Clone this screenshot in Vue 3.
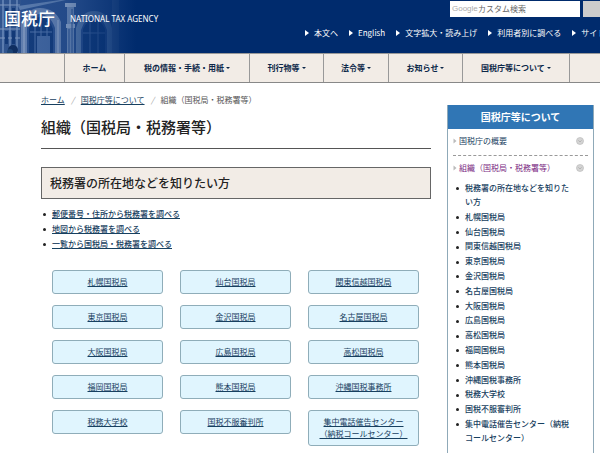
<script setup>
const headerLinks = ['本文へ', 'English', '文字拡大・読み上げ', '利用者別に調べる', 'サイト']

const navItems = [
  { label: 'ホーム', menu: false },
  { label: '税の情報・手続・用紙', menu: true },
  { label: '刊行物等', menu: true },
  { label: '法令等', menu: true },
  { label: 'お知らせ', menu: true },
  { label: '国税庁等について', menu: true },
]

const searches = [
  '郵便番号・住所から税務署を調べる',
  '地図から税務署を調べる',
  '一覧から国税局・税務署を調べる',
]

const offices = [
  ['札幌国税局'], ['仙台国税局'], ['関東信越国税局'],
  ['東京国税局'], ['金沢国税局'], ['名古屋国税局'],
  ['大阪国税局'], ['広島国税局'], ['高松国税局'],
  ['福岡国税局'], ['熊本国税局'], ['沖縄国税事務所'],
  ['税務大学校'], ['国税不服審判所'], ['集中電話催告センター', '（納税コールセンター）'],
]

const sideItems = [
  '税務署の所在地などを知りたい方',
  '札幌国税局', '仙台国税局', '関東信越国税局', '東京国税局', '金沢国税局',
  '名古屋国税局', '大阪国税局', '広島国税局', '高松国税局', '福岡国税局',
  '熊本国税局', '沖縄国税事務所', '税務大学校', '国税不服審判所',
  '集中電話催告センター（納税コールセンター）',
]
</script>

<template>
  <div class="page">
    <header class="header">
      <svg class="building" viewBox="0 0 136 53" aria-hidden="true">
        <defs>
          <linearGradient id="fade" x1="0" x2="1" y1="0" y2="0">
            <stop offset="0" stop-color="#002b6d" stop-opacity="0" />
            <stop offset="0.5" stop-color="#002b6d" stop-opacity="0.2" />
            <stop offset="0.8" stop-color="#002b6d" stop-opacity="0.65" />
            <stop offset="1" stop-color="#002b6d" />
          </linearGradient>
        </defs>
        <rect width="136" height="53" fill="#2c5290" />
        <path d="M0 0H21V53H0Z" fill="#31558f" />
        <path d="M3 0V53M10 0V53M17 0V53" stroke="#5c7daf" stroke-width="2" />
        <path d="M0 5H20M0 29H20M0 38H20" stroke="#8099bf" stroke-width="1" />
        <path d="M5 8H8V26H5ZM12 8H15V26H12ZM5 31H8V44H5ZM12 31H15V44H12Z" fill="#133a78" />
        <path d="M18 6L60 0H66L20 10Z" fill="#5f7fb0" />
        <path d="M21 53V24Q27 8 40 8Q55 8 61 22V53H55V28Q50 14 40 14Q30 14 27 28V53Z" fill="#6683b2" />
        <path d="M29 53V29Q32 17 40 17Q49 17 53 29V53Z" fill="#153d7c" />
        <path d="M30 32H52M35 22V53M41 18V53M47 22V53" stroke="#5274aa" stroke-width="1" />
        <path d="M37 36H50V53H37Z" fill="#4569a2" />
        <path d="M24 22V53M58 20V53" stroke="#99adcc" stroke-width="1" />
        <path d="M67 4H74V53H67Z" fill="#6c89b5" />
        <path d="M65 3H76V7H65ZM66 24H75V28H66Z" fill="#8ea5c8" />
        <path d="M69 29V53M72 9V53" stroke="#2c5290" stroke-width="1" />
        <path d="M76 53V28Q81 11 94 11Q108 11 112 28V53H107V30Q103 17 94 17Q85 17 81 30V53Z" fill="#5e7fae" />
        <path d="M83 53V29Q87 20 94 20Q101 20 105 29V53Z" fill="#163f7e" />
        <path d="M83 33H105M90 22V53M98 22V53" stroke="#486ca3" stroke-width="1" />
        <path d="M112 0H119V53H112Z" fill="#48699d" />
        <circle cx="13" cy="50" r="5" fill="#102f61" />
        <circle cx="10" cy="52" r="3" fill="#1d4476" />
        <rect width="136" height="53" fill="url(#fade)" />
      </svg>
      <a class="logo" href="#">国税庁</a>
      <span class="agency">NATIONAL TAX AGENCY</span>
      <div class="tools">
        <form class="search" @submit.prevent>
          <label class="field">
            <span class="google">Google</span>
            <input type="search" placeholder="カスタム検索" aria-label="カスタム検索" />
          </label>
          <button class="go" type="submit" aria-label="検索"></button>
        </form>
        <nav class="links">
          <a v-for="link in headerLinks" :key="link" href="#">{{ link }}</a>
        </nav>
      </div>
    </header>

    <nav class="nav">
      <a v-for="item in navItems" :key="item.label" href="#" :class="{ menu: item.menu }">{{ item.label }}</a>
    </nav>

    <div class="body">
      <main class="main">
        <nav class="crumbs">
          <a href="#">ホーム</a><i>/</i><a href="#">国税庁等について</a><i>/</i><span>組織（国税局・税務署等）</span>
        </nav>
        <h1>組織（国税局・税務署等）</h1>
        <h2>税務署の所在地などを知りたい方</h2>
        <ul class="searches">
          <li v-for="s in searches" :key="s"><a href="#">{{ s }}</a></li>
        </ul>
        <div class="offices">
          <a v-for="o in offices" :key="o[0]" href="#">
            <span v-for="line in o" :key="line">{{ line }}</span>
          </a>
        </div>
      </main>

      <aside class="side">
        <h3>国税庁等について</h3>
        <div class="sidebody">
          <a class="sidelink" href="#">
            <svg class="arrow" viewBox="0 0 4 6" aria-hidden="true"><path d="M0.5 0.5L3.5 3L0.5 5.5Z" fill="#bbb" /></svg>
            <span>国税庁の概要</span>
            <svg class="knob" viewBox="0 0 8 8" aria-hidden="true"><circle cx="4" cy="4" r="3.5" fill="#d4d4d4" stroke="#b5b5b5" stroke-width="0.6" /><path d="M2.4 3.4L4 4.9L5.6 3.4" fill="none" stroke="#aaa" stroke-width="0.8" /></svg>
          </a>
          <a class="sidelink current" href="#">
            <svg class="arrow" viewBox="0 0 4 6" aria-hidden="true"><path d="M0.5 0.5L3.5 3L0.5 5.5Z" fill="#bbb" /></svg>
            <span>組織（国税局・税務署等）</span>
            <svg class="knob" viewBox="0 0 8 8" aria-hidden="true"><circle cx="4" cy="4" r="3.5" fill="#d4d4d4" stroke="#b5b5b5" stroke-width="0.6" /><path d="M2.4 3.4L4 4.9L5.6 3.4" fill="none" stroke="#aaa" stroke-width="0.8" /></svg>
          </a>
          <ul class="sidelist">
            <li v-for="s in sideItems" :key="s"><a href="#">{{ s }}</a></li>
          </ul>
        </div>
      </aside>
    </div>
  </div>
</template>

<style>
body {
  background: #fff;
}
</style>

<style scoped>
* {
  box-sizing: border-box;
}
.page {
  min-height: 100vh;
  display: flex;
  flex-direction: column;
  overflow: hidden;
  font-family: "Noto Sans CJK JP", sans-serif;
  font-size: 8px;
  line-height: 14px;
  color: #222;
}
h1, h2, h3, ul {
  margin: 0;
  padding: 0;
  font-weight: 500;
}
ul {
  list-style: none;
}
li::before {
  content: "";
  display: inline-block;
  width: 3px;
  height: 3px;
  margin: 0 6px 0 -9px;
  border-radius: 50%;
  background: #222;
  vertical-align: middle;
}
a {
  color: #174060;
}

.header {
  position: relative;
  display: flex;
  height: 53px;
  background: #002b6d;
  color: #fff;
}
.building {
  position: absolute;
  left: 0;
  top: 0;
  height: 100%;
}
.header a {
  color: #fff;
  text-decoration: none;
}
.logo,
.agency {
  position: relative;
  white-space: nowrap;
}
.logo {
  width: 70px;
  padding-left: 4px;
  font-size: 17px;
  line-height: 36px;
  font-weight: 500;
}
.agency {
  font-family: "Noto Sans", sans-serif;
  font-size: 8px;
  line-height: 37px;
}
.tools {
  margin-left: auto;
  width: 295px;
  flex: none;
}
.search {
  display: flex;
  justify-content: flex-end;
  gap: 3px;
  padding-top: 1px;
}
.field {
  display: flex;
  align-items: center;
  width: 130px;
  height: 16px;
  padding-left: 2px;
  background: #fff;
}
.google {
  width: 26px;
  color: #aaa;
  font-family: "Liberation Sans", sans-serif;
}
.field input {
  width: 90px;
  padding: 0;
  border: 0;
  outline: 0;
  background: none;
  font: inherit;
}
.field input::placeholder {
  color: #666;
  opacity: 1;
}
.go {
  width: 17px;
  height: 16px;
  padding: 0;
  border: 0;
  background: #ccc;
}
.links {
  display: flex;
  gap: 11px;
  padding-top: 9px;
  white-space: nowrap;
}
.links a {
  flex: none;
}
.links a::before {
  content: "";
  display: inline-block;
  margin-right: 5px;
  border: solid transparent;
  border-width: 3px 0 3px 4px;
  border-left-color: #fff;
}

.nav {
  display: grid;
  grid-template-columns: 60px 125px 74px 65px 74px 108px;
  height: 30px;
  padding-left: 64px;
  border-top: 1px solid #999;
  border-bottom: 1px solid #888;
  background: #f2ece6;
}
.nav a {
  display: flex;
  align-items: center;
  justify-content: center;
  gap: 2px;
  border-left: 1px solid #999;
  color: #0c2748;
  font-weight: 700;
  text-decoration: none;
  white-space: nowrap;
}
.nav a:last-child {
  border-right: 1px solid #999;
}
.menu::after {
  content: "";
  border: solid transparent;
  border-width: 2px 2px 0;
  border-top-color: #0c2748;
}

.body {
  flex: 1;
  display: flex;
  gap: 16px;
  padding: 10px 6px 0 41px;
}
.main {
  flex: 1;
  min-width: 0;
}
.crumbs {
  display: flex;
  color: #555;
}
.crumbs i {
  width: 16px;
  text-align: center;
  color: #999;
}
h1 {
  padding: 7px 0 8px;
  border-bottom: 1px solid #555;
  font-size: 15px;
  line-height: 26px;
}
h2 {
  margin-top: 18px;
  padding: 0 8px;
  border: 1px solid #666;
  background: #f2ece6;
  font-size: 12px;
  line-height: 30px;
}
.searches {
  padding: 7px 0 0 11px;
  line-height: 15px;
}
.offices {
  display: grid;
  grid-template-columns: repeat(3, 1fr);
  align-items: start;
  gap: 11px 17px;
  padding: 19px 12px 6px 11px;
}
.offices a {
  display: flex;
  flex-direction: column;
  align-items: center;
  padding: 5px 0;
  border: 1px solid #8fadb9;
  border-radius: 3px;
  background: #e0f5fe;
  line-height: 12px;
  text-decoration: underline;
}

.side {
  flex: none;
  width: 147px;
  margin-top: 12px;
  display: flex;
  flex-direction: column;
  border: solid #8fa9b8;
  border-width: 0 1px;
}
h3 {
  background: #3076b5;
  color: #fff;
  font-size: 10px;
  font-weight: 700;
  line-height: 24px;
  text-align: center;
}
.sidebody {
  flex: 1;
  display: flex;
  flex-direction: column;
  padding: 0 5px 8px;
}
.sidelink {
  display: flex;
  align-items: center;
  gap: 2px;
  padding: 5px 4px 7px 0;
  text-decoration: none;
}
.sidelink.current {
  padding-bottom: 6px;
  border-top: 1px dashed #999;
  color: #7a1f82;
}
.arrow {
  width: 4px;
  height: 6px;
}
.knob {
  width: 8px;
  height: 8px;
  margin-left: auto;
}
.sidelist {
  flex: 1;
  display: flex;
  flex-direction: column;
  justify-content: space-between;
  padding: 0 16px 0 12px;
}
.sidelist a {
  text-decoration: none;
}
</style>
